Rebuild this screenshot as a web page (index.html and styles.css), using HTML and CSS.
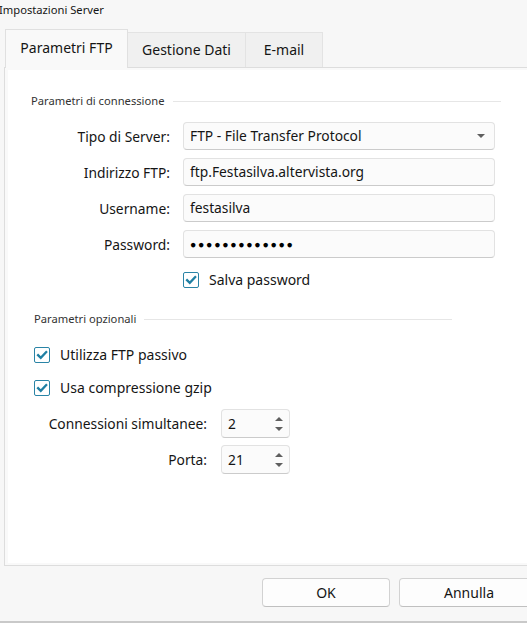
FILE: index.html
```html
<!DOCTYPE html>
<html lang="it">
<head>
<meta charset="utf-8">
<title>Impostazioni Server</title>
<link rel="stylesheet" href="styles.css">
</head>
<body>
<div class="window">
  <div class="title">Impostazioni Server</div>
  <div class="tabs">
    <div class="tab active">Parametri FTP</div>
    <div class="tab tab-gestione">Gestione Dati</div>
    <div class="tab tab-email">E-mail</div>
  </div>
  <div class="pane">
    <div class="pane-inner">
      <div class="group-header g1"><span>Parametri di connessione</span><div class="rule"></div></div>
      <div class="conn-rows">
        <div class="row">
          <label class="lbl">Tipo di Server:</label>
          <div class="field combo">FTP - File Transfer Protocol<span class="combo-arrow"></span></div>
        </div>
        <div class="row">
          <label class="lbl">Indirizzo FTP:</label>
          <div class="field">ftp.Festasilva.altervista.org</div>
        </div>
        <div class="row">
          <label class="lbl">Username:</label>
          <div class="field">festasilva</div>
        </div>
        <div class="row">
          <label class="lbl">Password:</label>
          <div class="field pwd">●●●●●●●●●●●●●</div>
        </div>
      </div>
      <div class="check save-pwd"><span class="box"><svg viewBox="0 0 16 16" width="16" height="16"><path d="M3.5 8.2 L6.6 11.3 L12.8 4.6" fill="none" stroke="#1f7fa3" stroke-width="2.6" stroke-linecap="square"/></svg></span>Salva password</div>

      <div class="group-header g2"><span>Parametri opzionali</span><div class="rule"></div></div>
      <div class="check opt1"><span class="box"><svg viewBox="0 0 16 16" width="16" height="16"><path d="M3.5 8.2 L6.6 11.3 L12.8 4.6" fill="none" stroke="#1f7fa3" stroke-width="2.6" stroke-linecap="square"/></svg></span>Utilizza FTP passivo</div>
      <div class="check opt2"><span class="box"><svg viewBox="0 0 16 16" width="16" height="16"><path d="M3.5 8.2 L6.6 11.3 L12.8 4.6" fill="none" stroke="#1f7fa3" stroke-width="2.6" stroke-linecap="square"/></svg></span>Usa compressione gzip</div>
      <div class="spin-rows">
        <div class="row srow">
          <label class="lbl slbl">Connessioni simultanee:</label>
          <div class="field spin">2<span class="spin-arrows"><span class="up"></span><span class="down"></span></span></div>
        </div>
        <div class="row srow">
          <label class="lbl slbl">Porta:</label>
          <div class="field spin">21<span class="spin-arrows"><span class="up"></span><span class="down"></span></span></div>
        </div>
      </div>
    </div>
  </div>
  <div class="footer">
    <button class="btn ok">OK</button>
    <button class="btn cancel">Annulla</button>
  </div>
</div>
</body>
</html>
```

FILE: styles.css
```css
* { box-sizing: border-box; }
html, body { margin: 0; padding: 0; }
body {
  background: #f7f7f7;
  font-family: "Noto Sans", "Open Sans", sans-serif;
  color: #151515;
  width: 527px;
  height: 623px;
  overflow: hidden;
}
.window {
  position: relative;
  width: 527px;
  height: 623px;
  border-bottom: 2px solid #c9c9c9;
}
.title {
  font-size: 11.2px;
  line-height: 20px;
  height: 20px;
  margin-left: -1px;
}
.tabs {
  display: flex;
  align-items: flex-end;
  margin-left: 5px;
  margin-top: 9px;
  height: 38px;
  position: relative;
  z-index: 1;
}
.tab {
  font-size: 14px;
  height: 35px;
  line-height: 33px;
  border: 1px solid #e3e3e3;
  border-bottom: none;
  background: #f0f0f0;
  text-align: center;
}
.tab.active {
  width: 123px;
  line-height: 36px;
  background: #f9f9f9;
  border-color: #e0e0e0;
  margin-bottom: -1px;
  height: 39px;
}
.tab-gestione { width: 118px; border-left: none; }
.tab-email { width: 77px; border-left: none; }
.pane {
  margin-left: 4px;
  width: 540px;
  height: 499px;
  border: 1px solid #dddddd;
  background: #f9f9f9;
  padding: 2px 0 2px 3px;
}
.pane-inner {
  background: #ffffff;
  height: 100%;
  padding-top: 23px;
}
.group-header {
  display: flex;
  align-items: center;
  font-size: 11.2px;
  line-height: 16px;
  height: 16px;
  color: #333333;
}
.group-header .rule {
  height: 1px;
  background: #e6e6e6;
  margin-left: 8px;
}
.g1 { padding-left: 23px; }
.g1 .rule { width: 328px; }
.g2 { padding-left: 26px; margin-top: 23px; }
.g2 .rule { width: 308px; }
.conn-rows {
  display: flex;
  flex-direction: column;
  gap: 8px;
  margin-top: 13px;
}
.row {
  display: flex;
  align-items: center;
}
.lbl {
  width: 162px;
  text-align: right;
  font-size: 13.8px;
}
.field {
  margin-left: 13px;
  width: 312px;
  height: 28px;
  border: 1px solid #e2e2e2;
  border-bottom-color: #cbcbcb;
  border-radius: 4px;
  background: #fbfbfb;
  font-size: 13.8px;
  line-height: 26px;
  padding-left: 6px;
  position: relative;
}
.combo-arrow {
  position: absolute;
  right: 9px;
  top: 11px;
  width: 0; height: 0;
  border-left: 4px solid transparent;
  border-right: 4px solid transparent;
  border-top: 4px solid #5f5f5f;
}
.pwd {
  font-size: 10.5px;
  letter-spacing: 1.7px;
  color: #000;
}
.check {
  display: flex;
  align-items: center;
  font-size: 14px;
  height: 16px;
  line-height: 16px;
}
.check .box {
  width: 16px;
  height: 16px;
  border: 1px solid #2a84a6;
  border-radius: 2px;
  background: #fff;
  margin-right: 10px;
  display: flex;
  align-items: center;
  justify-content: center;
}
.check .box svg { width: 14px; height: 14px; }
.save-pwd { margin-left: 175px; margin-top: 14px; }
.opt1 { margin-left: 26px; margin-top: 20px; }
.opt2 { margin-left: 26px; margin-top: 17px; }
.spin-rows {
  display: flex;
  flex-direction: column;
  gap: 7px;
  margin-top: 13px;
}
.slbl { width: 199px; }
.spin {
  width: 69px;
  height: 29px;
  line-height: 27px;
  margin-left: 14px;
}
.spin-arrows {
  position: absolute;
  right: 6px;
  top: 0;
  height: 100%;
  display: flex;
  flex-direction: column;
  justify-content: center;
  gap: 6px;
}
.spin-arrows .up {
  width: 0; height: 0;
  border-left: 4px solid transparent;
  border-right: 4px solid transparent;
  border-bottom: 4px solid #5f5f5f;
}
.spin-arrows .down {
  width: 0; height: 0;
  border-left: 4px solid transparent;
  border-right: 4px solid transparent;
  border-top: 4px solid #5f5f5f;
}
.footer {
  display: flex;
  gap: 9px;
  margin-left: 262px;
  margin-top: 12px;
}
.btn {
  font-family: inherit;
  font-size: 14px;
  color: #151515;
  height: 29px;
  border: 1px solid #d2d2d2;
  border-bottom-color: #c0c0c0;
  border-radius: 4px;
  background: #fdfdfd;
  flex-shrink: 0;
}
.ok { width: 128px; }
.cancel { width: 140px; }
```
